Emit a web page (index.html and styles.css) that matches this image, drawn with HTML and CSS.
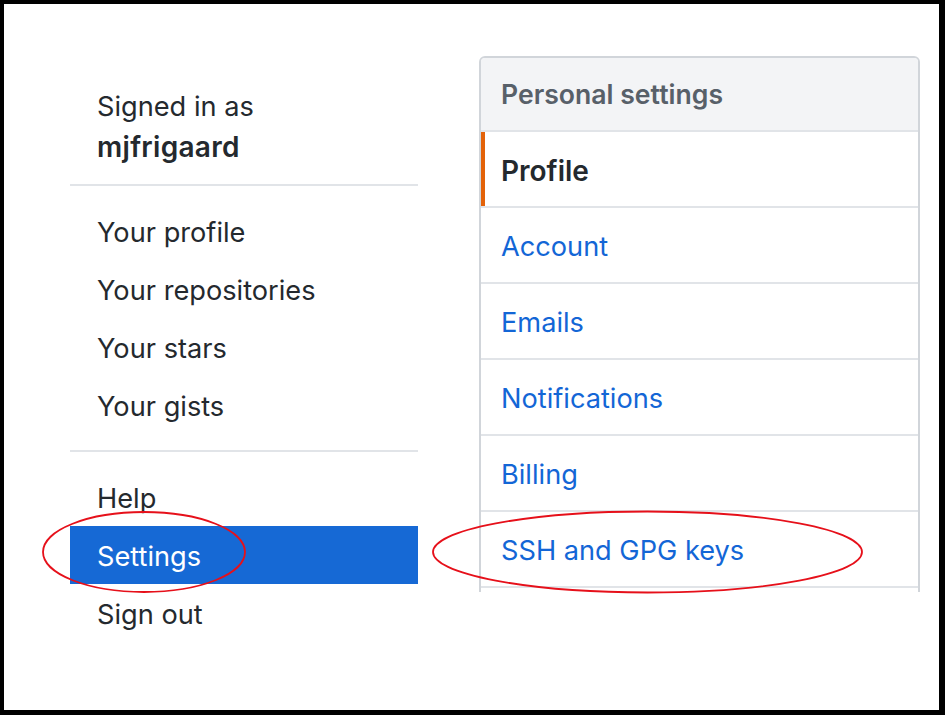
FILE: index.html
```html
<!DOCTYPE html>
<html lang="en">
<head>
<meta charset="utf-8">
<title>Settings</title>
<link rel="stylesheet" href="styles.css">
</head>
<body>
<div class="frame">
  <div class="layout">
    <nav class="user-menu">
      <div class="user-header">Signed in as<br><strong>mjfrigaard</strong></div>
      <div class="divider"></div>
      <ul class="menu-group">
        <li><a class="menu-item" href="#">Your profile</a></li>
        <li><a class="menu-item" href="#">Your repositories</a></li>
        <li><a class="menu-item" href="#">Your stars</a></li>
        <li><a class="menu-item" href="#">Your gists</a></li>
      </ul>
      <div class="divider"></div>
      <ul class="menu-group">
        <li><a class="menu-item" href="#">Help</a></li>
        <li><a class="menu-item active" href="#">Settings</a></li>
        <li><a class="menu-item" href="#">Sign out</a></li>
      </ul>
    </nav>
    <div class="panel-clip">
      <nav class="panel">
        <div class="panel-heading">Personal settings</div>
        <a class="row selected" href="#">Profile</a>
        <a class="row" href="#">Account</a>
        <a class="row" href="#">Emails</a>
        <a class="row" href="#">Notifications</a>
        <a class="row" href="#">Billing</a>
        <a class="row" href="#">SSH and GPG keys</a>
        <div class="row row-empty"></div>
      </nav>
    </div>
  </div>
  <svg class="marks" width="945" height="715" viewBox="0 0 945 715" aria-hidden="true">
    <ellipse cx="144" cy="552" rx="101" ry="40" fill="none" stroke="#e6101a" stroke-width="1.8"/>
    <ellipse cx="647.5" cy="552" rx="214.5" ry="40.5" fill="none" stroke="#e6101a" stroke-width="1.8"/>
  </svg>
</div>
</body>
</html>
```

FILE: styles.css
```css
html, body {
  margin: 0;
  padding: 0;
  background: #fff;
}

body {
  font-family: Inter, "Liberation Sans", Arial, sans-serif;
}

.frame {
  position: relative;
  width: 945px;
  height: 715px;
  box-sizing: border-box;
  border: solid #000;
  border-width: 4px 6px 5px 4px;
  background: #fff;
  overflow: hidden;
}

.layout {
  display: flex;
  align-items: flex-start;
  gap: 61px;
  padding: 52px 0 0 66px;
}

/* Left user dropdown */
.user-menu {
  width: 348px;
  margin-top: 10px;
  color: #24292e;
  font-size: 27.2px;
}

.user-header {
  height: 80px;
  padding: 21px 26px 17px 27px;
  line-height: 40px;
}

.user-header strong {
  font-size: 28px;
  font-weight: 600;
  letter-spacing: 0.3px;
}

.divider {
  height: 2px;
  background: #e1e4e8;
}

.menu-group {
  list-style: none;
  margin: 0;
  padding: 16px 0;
}

.menu-item {
  display: block;
  height: 42px;
  padding: 10px 26px 6px 27px;
  line-height: 42px;
  color: #24292e;
  text-decoration: none;
}

.menu-item.active {
  background: #1669d5;
  color: #fff;
}

/* Right settings panel */
.panel-clip {
  width: 441px;
  height: 536px;
  overflow: hidden;
  flex: none;
}

.panel {
  border: 2px solid #d1d5da;
  border-radius: 6px;
  overflow: hidden;
}

.panel-heading {
  height: 40px;
  padding: 16px 20px 16px 20px;
  line-height: 40px;
  font-size: 26.6px;
  font-weight: 600;
  color: #586069;
  background: #f3f4f6;
  border-bottom: 2px solid #e1e4e8;
}

.row {
  display: block;
  height: 40px;
  padding: 19px 20px 15px 20px;
  line-height: 40px;
  font-size: 27.2px;
  color: #1366d6;
  text-decoration: none;
  border-bottom: 2px solid #e1e4e8;
}

.row.selected {
  color: #24292e;
  font-size: 28px;
  font-weight: 600;
  box-shadow: inset 4px 0 0 #e36209;
}

/* Red annotation ellipses drawn over the page */
.marks {
  position: absolute;
  left: -4px;
  top: -4px;
  pointer-events: none;
}
```
